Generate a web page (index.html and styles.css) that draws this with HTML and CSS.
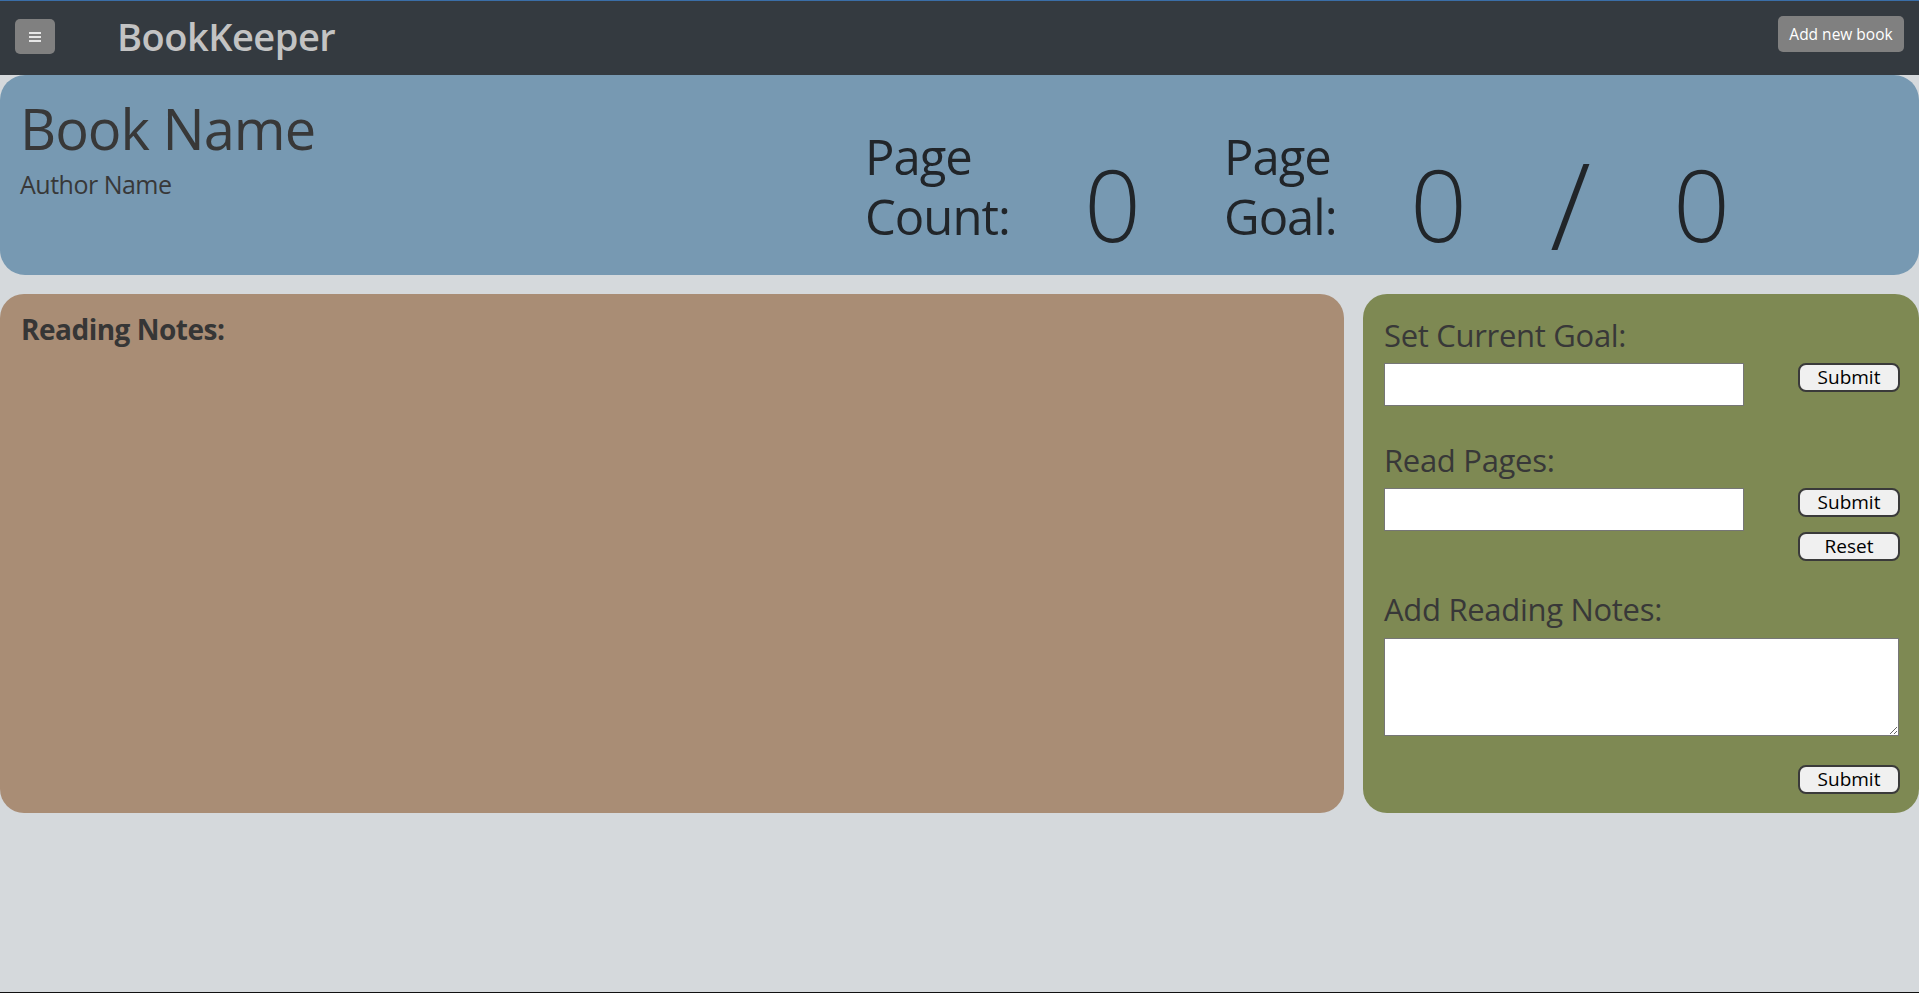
FILE: index.html
```html
<!DOCTYPE html>
<html lang="en">
<head>
<meta charset="utf-8">
<title>BookKeeper</title>
<link rel="stylesheet" href="styles.css">
</head>
<body>
<div class="app">
  <nav class="navbar">
    <button class="menu-btn" type="button" aria-label="Menu">
      <svg width="12" height="10" viewBox="0 0 12 10"><rect x="0" y="0" width="12" height="2" fill="#e6e6e6"/><rect x="0" y="4" width="12" height="2" fill="#e6e6e6"/><rect x="0" y="8" width="12" height="2" fill="#e6e6e6"/></svg>
    </button>
    <span class="brand">BookKeeper</span>
    <button class="add-btn" type="button">Add new book</button>
  </nav>

  <section class="book-card">
    <div class="book-info">
      <h1 class="book-name">Book Name</h1>
      <div class="author-name">Author Name</div>
    </div>
    <div class="stat-label">Page Count:</div>
    <div class="stat-num">0</div>
    <div class="stat-label">Page Goal:</div>
    <div class="stat-num">0</div>
    <div class="stat-num stat-slash">/</div>
    <div class="stat-num">0</div>
  </section>

  <div class="lower">
    <section class="notes-card">
      <h2 class="notes-title">Reading Notes:</h2>
    </section>
    <section class="form-card">
      <h3 class="form-title">Set Current Goal:</h3>
      <div class="form-row">
        <input class="text-input" type="text">
        <div class="btn-stack">
          <button class="sys-btn" type="button">Submit</button>
        </div>
      </div>
      <h3 class="form-title gap-top">Read Pages:</h3>
      <div class="form-row">
        <input class="text-input" type="text">
        <div class="btn-stack">
          <button class="sys-btn" type="button">Submit</button>
          <button class="sys-btn" type="button">Reset</button>
        </div>
      </div>
      <h3 class="form-title gap-top2">Add Reading Notes:</h3>
      <textarea class="notes-input"></textarea>
      <div class="submit-row">
        <button class="sys-btn" type="button">Submit</button>
      </div>
    </section>
  </div>
</div>
</body>
</html>
```

FILE: styles.css
```css
html, body {
  margin: 0;
  padding: 0;
}
body {
  background: #d5d9dc;
  font-family: "Open Sans", "Noto Sans", sans-serif;
  color: #212529;
}
.app {
  min-height: 100vh;
  box-sizing: border-box;
  border-top: 1px solid #3a6ea8;
  border-bottom: 1px solid #111;
}
.navbar {
  height: 74px;
  background: #343a40;
  display: flex;
  align-items: flex-start;
  padding: 0 15px;
}
.menu-btn {
  width: 40px;
  height: 35px;
  margin-top: 18px;
  background: #808080;
  border: none;
  border-radius: 5px;
  display: flex;
  align-items: center;
  justify-content: center;
  padding: 0;
}
.brand {
  margin-left: 62px;
  margin-top: 12px;
  font-size: 38px;
  line-height: 46px;
  font-weight: 600;
  color: #c3c3c3;
  letter-spacing: -0.5px;
}
.add-btn {
  margin-left: auto;
  margin-top: 15px;
  width: 126px;
  height: 36px;
  background: #808080;
  color: #fff;
  border: none;
  border-radius: 5px;
  font-family: "Open Sans", sans-serif;
  font-size: 15.5px;
  padding: 0;
}

.book-card {
  height: 200px;
  box-sizing: border-box;
  background: #7799b2;
  border-radius: 25px;
  padding: 20px 20px 0 20px;
  display: grid;
  grid-template-columns: 845px 219px 140px 186px 140px 123px auto;
  align-items: start;
}
.book-name {
  margin: 0;
  font-size: 56px;
  line-height: 1.2;
  font-weight: 400;
  color: #383838;
  letter-spacing: -1px;
}
.author-name {
  margin-top: 7px;
  font-size: 25px;
  line-height: 1.2;
  font-weight: 500;
  color: #383838;
  letter-spacing: -0.5px;
}
.stat-label {
  margin-top: 31px;
  font-size: 49px;
  line-height: 60px;
  font-weight: 500;
  color: #212529;
  letter-spacing: -1px;
}
.stat-num {
  margin-top: 48px;
  font-size: 100px;
  line-height: 1.2;
  font-weight: 300;
  color: #212529;
}
.stat-num.stat-slash {
  margin-top: 37px;
  font-size: 120px;
}

.lower {
  margin-top: 19px;
  display: grid;
  grid-template-columns: 1344px 1fr;
  gap: 19px;
}
.notes-card {
  height: 519px;
  box-sizing: border-box;
  background: #a98d75;
  border-radius: 24px;
  padding: 19px 21px;
}
.notes-title {
  margin: 0;
  font-size: 28px;
  line-height: 1.2;
  font-weight: 700;
  color: #363636;
  letter-spacing: -0.5px;
}
.form-card {
  height: 519px;
  box-sizing: border-box;
  background: #7e8953;
  border-radius: 24px;
  padding: 23px 19px 0 21px;
  display: flex;
  flex-direction: column;
}
.form-title {
  margin: 0 0 9px 0;
  font-size: 31px;
  line-height: 1.2;
  font-weight: 500;
  color: #383838;
  letter-spacing: -0.3px;
}
.form-title.gap-top {
  margin-top: 36px;
}
.form-title.gap-top2 {
  margin-top: 30px;
}
.form-row {
  display: flex;
  justify-content: space-between;
  align-items: flex-start;
}
.text-input {
  width: 360px;
  height: 43px;
  box-sizing: border-box;
  margin: 0;
  border: 1px solid #767676;
  background: #fff;
}
.btn-stack {
  display: flex;
  flex-direction: column;
  gap: 15px;
}
.sys-btn {
  width: 102px;
  height: 29px;
  box-sizing: border-box;
  background: #f0f0f0;
  border: 2px solid #3a3a3a;
  border-radius: 8px;
  font-family: "Open Sans", sans-serif;
  font-size: 19px;
  line-height: 1;
  color: #000;
  padding: 0;
}
.notes-input {
  width: 515px;
  height: 98px;
  box-sizing: border-box;
  margin: 0;
  border: 1px solid #767676;
  background: #fff;
  resize: both;
}
.submit-row {
  margin-top: 29px;
  display: flex;
  justify-content: flex-end;
}
```
